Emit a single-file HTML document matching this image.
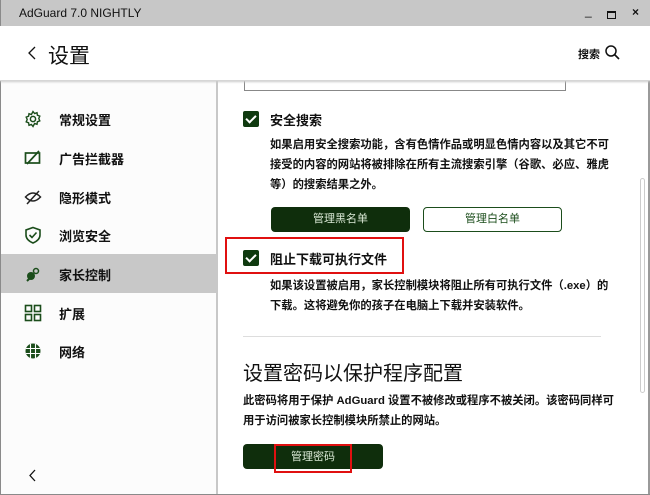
<!DOCTYPE html>
<html><head><meta charset="utf-8"><style>
*{margin:0;padding:0;box-sizing:border-box}
body{width:650px;height:495px;overflow:hidden;background:#fff;font-family:"Liberation Sans","Noto Sans CJK SC",sans-serif;color:#111;position:relative}
.title{position:absolute;left:0;top:0;width:650px;height:26px;background:#c7c7c7;font-size:12px;}
.title span{position:absolute;left:19px;top:6px}
.hdr{position:absolute;left:0;top:26px;width:650px;height:55px;background:#fff;border-bottom:1px solid #d6d6d6;box-shadow:0 1px 2px #ccc;z-index:2}
.side{position:absolute;left:1px;top:81px;width:217px;height:413px;background:#fcfcfc;border-right:2px solid #c8c8c8}
.item{position:absolute;left:0;width:216px;height:39px;font-size:13px}
.item span{position:absolute;left:58px;top:11px;font-weight:bold}
.item svg{position:absolute;left:23px;top:11px}
.sel{background:#c8c8c8}
.main{position:absolute;left:219px;top:81px;width:420px;height:413px;overflow:hidden;background:#fff}
.cb{position:absolute;width:16px;height:16px;background:#0f3a0f;border-radius:2px}
.cb:after{content:"";position:absolute;left:5px;top:2px;width:4px;height:8px;border:solid #fff;border-width:0 2px 2px 0;transform:rotate(45deg)}
.p{position:absolute;font-size:11.3px;line-height:20px;font-weight:bold}
.btn{position:absolute;height:25px;border-radius:4px;font-size:11px;text-align:center;line-height:25px}
.red{position:absolute;border:2.5px solid #e01010}
</style></head><body>
<div class="title"><span>AdGuard 7.0 NIGHTLY</span>
<span style="left:585px;top:4px">_</span>
<div style="position:absolute;left:607px;top:11px;width:9px;height:8px;border:1px solid #111;border-top-width:2px"></div>
<span style="left:632px;top:5px;font-weight:bold">×</span>
</div>
<div class="hdr">
<svg style="position:absolute;left:27px;top:20px" width="10" height="14"><path d="M8 1 L2 7 L8 13" fill="none" stroke="#111" stroke-width="1.3"/></svg>
<span style="position:absolute;left:48px;top:14px;font-size:21px">设置</span>
<span style="position:absolute;left:578px;top:20px;font-size:11px;font-weight:bold">搜索</span>
<svg style="position:absolute;left:604px;top:18px" width="18" height="18"><circle cx="7" cy="7" r="5" fill="none" stroke="#111" stroke-width="1.5"/><path d="M10.5 10.5 L15 15" stroke="#111" stroke-width="1.6"/></svg>
</div>
<div class="side">
<div class="item" style="top:18px"><svg width="18" height="18" viewBox="0 0 18 18"><circle cx="9" cy="9" r="2.6" fill="none" stroke="#1b4d1b" stroke-width="1.5"/><path d="M9 1.5l1.6 2 2.4-.8.4 2.5 2.4.9-1 2.4 1 2.4-2.4.9-.4 2.5-2.4-.8L9 16.5l-1.6-2-2.4.8-.4-2.5-2.4-.9 1-2.4-1-2.4 2.4-.9.4-2.5 2.4.8z" fill="none" stroke="#1b4d1b" stroke-width="1.4"/></svg><span>常规设置</span></div>
<div class="item" style="top:57px"><svg width="18" height="18"><rect x="1.5" y="4" width="14" height="10" fill="none" stroke="#1b4d1b" stroke-width="1.7"/><path d="M3 15 L15 2" stroke="#1b4d1b" stroke-width="1.7"/></svg><span>广告拦截器</span></div>
<div class="item" style="top:96px"><svg width="18" height="18"><path d="M1.5 9 Q9 1 16.5 9 Q9 17 1.5 9Z" fill="none" stroke="#222" stroke-width="1.5"/><path d="M3 16 L15 3" stroke="#222" stroke-width="1.5"/></svg><span>隐形模式</span></div>
<div class="item" style="top:134px"><svg width="18" height="18"><path d="M9 1.5 L16 4 V9 Q16 14 9 17 Q2 14 2 9 V4Z" fill="none" stroke="#1b4d1b" stroke-width="1.6"/><path d="M5.5 9 L8 11.5 L12.5 6.5" fill="none" stroke="#1b4d1b" stroke-width="1.6"/></svg><span>浏览安全</span></div>
<div class="item sel" style="top:173px"><svg width="18" height="18"><circle cx="7" cy="11" r="4" fill="#1b4d1b"/><circle cx="12" cy="6" r="2.5" fill="none" stroke="#1b4d1b" stroke-width="1.5"/><path d="M3 16 L6 13" stroke="#1b4d1b" stroke-width="2"/></svg><span>家长控制</span></div>
<div class="item" style="top:212px"><svg width="18" height="18"><rect x="1.5" y="1.5" width="6" height="6" fill="none" stroke="#1b4d1b" stroke-width="1.6"/><rect x="10.5" y="1.5" width="6" height="6" fill="none" stroke="#1b4d1b" stroke-width="1.6"/><rect x="1.5" y="10.5" width="6" height="6" fill="none" stroke="#1b4d1b" stroke-width="1.6"/><rect x="10.5" y="10.5" width="6" height="6" fill="none" stroke="#1b4d1b" stroke-width="1.6"/></svg><span>扩展</span></div>
<div class="item" style="top:250px"><svg width="18" height="18"><circle cx="9" cy="9" r="7.5" fill="#1b4d1b"/><path d="M2 6.5H16M2 11.5H16M6.5 2V16M11.5 2V16" stroke="#fff" stroke-width="1.1"/></svg><span>网络</span></div>
<svg style="position:absolute;left:27px;top:388px" width="10" height="14"><path d="M7 1 L2 6.5 L7 12" fill="none" stroke="#111" stroke-width="1.3"/></svg>
</div>
<div class="main">
<div style="position:absolute;left:25px;top:-10px;width:322px;height:20px;border:1px solid #888"></div>
<div class="cb" style="left:24px;top:30px"></div>
<span style="position:absolute;left:51px;top:29px;font-size:13px;font-weight:bold">安全搜索</span>
<div class="p" style="left:51px;top:54px;width:340px">如果启用安全搜索功能，含有色情作品或明显色情内容以及其它不可接受的内容的网站将被排除在所有主流搜索引擎（谷歌、必应、雅虎等）的搜索结果之外。</div>
<div class="btn" style="left:52px;top:126px;width:139px;background:#0f2e0c;color:#d9e8d5">管理黑名单</div>
<div class="btn" style="left:204px;top:126px;width:139px;border:1.5px solid #1b4d1b;color:#1b4d1b;line-height:22px">管理白名单</div>
<div class="cb" style="left:24px;top:169px"></div>
<span style="position:absolute;left:51px;top:168px;font-size:13px;font-weight:bold">阻止下载可执行文件</span>
<div class="p" style="left:51px;top:195px;width:340px">如果该设置被启用，家长控制模块将阻止所有可执行文件（.exe）的下载。这将避免你的孩子在电脑上下载并安装软件。</div>
<div style="position:absolute;left:24px;top:255px;width:358px;height:1px;background:#ddd"></div>
<span style="position:absolute;left:24px;top:276px;font-size:20px">设置密码以保护程序配置</span>
<div class="p" style="left:24px;top:310px;width:372px">此密码将用于保护 AdGuard 设置不被修改或程序不被关闭。该密码同样可用于访问被家长控制模块所禁止的网站。</div>
<div class="btn" style="left:24px;top:363px;width:140px;background:#0f2e0c;color:#d9e8d5;line-height:26px">管理密码</div>
</div>
<div style="position:absolute;left:640px;top:81px;width:10px;height:414px;background:#fff;border-right:2px solid #9a9a9a"></div>
<div style="position:absolute;left:640px;top:178px;width:5px;height:215px;border:1px solid #ccc;border-radius:3px"></div>
<div class="red" style="left:225px;top:237px;width:179px;height:37px"></div>
<div class="red" style="left:274px;top:444px;width:78px;height:29px"></div>
<div style="position:absolute;left:0;top:0;width:1px;height:495px;background:#8a8a8a"></div>
<div style="position:absolute;left:0;top:494px;width:650px;height:1px;background:#8a8a8a"></div>
</body></html>
